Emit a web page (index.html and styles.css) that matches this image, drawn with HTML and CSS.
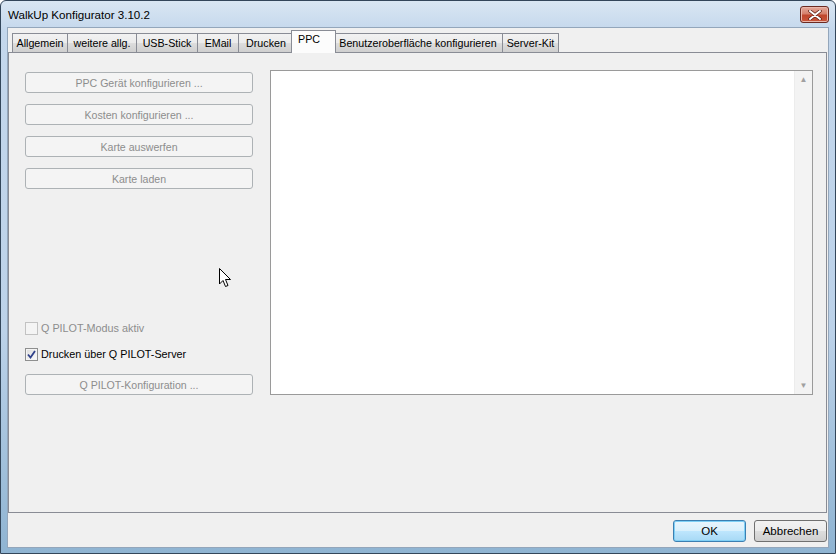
FILE: index.html
```html
<!DOCTYPE html>
<html lang="de">
  <head>
    <meta charset="UTF-8" />
    <title>WalkUp Konfigurator 3.10.2</title>
    <link rel="stylesheet" href="styles.css">
  </head>
  <body>
    <div class="window">
      <div class="titlebar">
        <span class="title">WalkUp Konfigurator 3.10.2</span>
        <button class="close-button">
          <svg width="14" height="10" viewBox="0 0 14 10">
            <path d="M2 1 L12 9 M12 1 L2 9" stroke="#5a1a10" stroke-width="3.4" stroke-linecap="round" />
            <path d="M2 1 L12 9 M12 1 L2 9" stroke="#fff" stroke-width="2" stroke-linecap="round" />
          </svg>
        </button>
      </div>

      <div class="client">
        <div class="tabs">
          <div class="tab" style="width: 56px">Allgemein</div>
          <div class="tab" style="width: 70px">weitere allg.</div>
          <div class="tab" style="width: 62px">USB-Stick</div>
          <div class="tab" style="width: 42px">EMail</div>
          <div class="tab" style="width: 56px">Drucken</div>
          <div class="tab active-tab" style="width: 45px">PPC</div>
          <div class="tab" style="width: 170px">Benutzeroberfläche konfigurieren</div>
          <div class="tab" style="width: 57px">Server-Kit</div>
        </div>

        <div class="tab-panel">
          <div class="left-column">
            <div class="button-group">
              <button class="button" disabled>PPC Gerät konfigurieren ...</button>
              <button class="button" disabled>Kosten konfigurieren ...</button>
              <button class="button" disabled>Karte auswerfen</button>
              <button class="button" disabled>Karte laden</button>
            </div>

            <div class="pilot-group">
              <label class="check-row disabled">
                <span class="checkbox"></span>
                Q PILOT-Modus aktiv
              </label>
              <label class="check-row">
                <span class="checkbox checked">
                  <svg width="9" height="9" viewBox="0 0 9 9">
                    <path d="M1 4.5 L3.5 7.5 L8 1" fill="none" stroke="#30418a" stroke-width="1.8" />
                  </svg>
                </span>
                Drucken über Q PILOT-Server
              </label>
              <button class="button pilot-button" disabled>Q PILOT-Konfiguration ...</button>
            </div>
          </div>

          <div class="log-box">
            <div class="log-text"></div>
            <div class="scrollbar">
              <span class="arrow">&#9650;</span>
              <span class="arrow">&#9660;</span>
            </div>
          </div>
        </div>

        <div class="dialog-buttons">
          <button class="dialog-button default-button">OK</button>
          <button class="dialog-button">Abbrechen</button>
        </div>
      </div>

      <svg class="cursor" width="13" height="20" viewBox="0 0 13 20">
        <path d="M0.5 0.5 L0.5 16 L4 12.5 L6.5 18.5 L9 17.5 L6.5 11.5 L11.5 11.5 Z" fill="#fff" stroke="#000" stroke-width="1" />
      </svg>
    </div>
  </body>
</html>
```

FILE: styles.css
```css
body {
  margin: 0;
  background: #ffffff;
  font-family: 'Liberation Sans', Arial, sans-serif;
  font-size: 11px;
}

.window {
  position: relative;
  width: 836px;
  height: 554px;
  box-sizing: border-box;
  border: 1px solid #33465a;
  border-radius: 6px 6px 0 0;
  background: linear-gradient(to bottom, #d9e6f3 0, #c4d7ec 30px, #bcd2e9 60%, #8fb4d2 100%);
  display: flex;
  flex-direction: column;
  padding: 0 6px 5px 6px;
}

.titlebar {
  height: 26px;
  display: flex;
  align-items: center;
  justify-content: space-between;
}

.title {
  font-size: 11.6px;
  color: #000;
  padding-left: 1px;
  padding-top: 1px;
}

.close-button {
  width: 29px;
  height: 17px;
  margin-top: 1px;
  border: 1px solid #6b2a22;
  border-radius: 3px;
  background: linear-gradient(to bottom, #e3a99b 0, #d6806c 45%, #c0462d 55%, #c9563b 100%);
  box-shadow: inset 0 0 0 1px #eab7ab;
  display: flex;
  align-items: center;
  justify-content: center;
  padding: 0;
}

.client {
  flex-grow: 1;
  background: #f0f0f0;
  border: 1px solid #93a6bb;
  display: flex;
  flex-direction: column;
}

.tabs {
  display: flex;
  align-items: flex-end;
  height: 24px;
  padding-left: 4px;
}

.tab {
  box-sizing: border-box;
  height: 19px;
  border: 1px solid #898c95;
  border-bottom: none;
  margin-right: -1px;
  background: linear-gradient(to bottom, #f2f2f2 0, #ebebeb 50%, #dddddd 51%, #cfcfcf 100%);
  text-align: center;
  line-height: 18px;
  font-size: 10.7px;
  color: #000;
  white-space: nowrap;
}

.active-tab {
  position: relative;
  z-index: 1;
  height: 23px;
  margin: 0 -3px -1px -2px;
  background: #fcfcfc;
  line-height: 17px;
  text-align: left;
  padding-left: 6px;
}

.tab-panel {
  height: 461px;
  box-sizing: border-box;
  margin: 0 1px 0 0;
  border: 1px solid #898c95;
  background: #f0f0f0;
  display: flex;
  gap: 17px;
  padding: 17px 0 0 16px;
}

.left-column {
  width: 228px;
  height: 325px;
  display: flex;
  flex-direction: column;
}

.button-group {
  display: flex;
  flex-direction: column;
  gap: 11px;
  margin-top: 2px;
}

.button {
  height: 21px;
  width: 228px;
  border: 1px solid #adb2b5;
  border-radius: 3px;
  background: #f4f4f4;
  color: #8d8d8d;
  font-family: inherit;
  font-size: 10.6px;
  padding: 0;
}

.pilot-group {
  margin-top: auto;
  display: flex;
  flex-direction: column;
}

.check-row {
  display: flex;
  align-items: center;
  gap: 3px;
  height: 16px;
  color: #000;
  font-size: 10.8px;
}

.check-row + .check-row {
  margin-top: 10px;
}

.check-row.disabled {
  color: #8d8d8d;
}

.checkbox {
  box-sizing: border-box;
  width: 13px;
  height: 13px;
  border: 1px solid #8e8f8f;
  background: linear-gradient(135deg, #dcdcdc, #fcfcfc);
  box-shadow: inset 0 0 0 1px #f4f4f4;
  display: flex;
  align-items: center;
  justify-content: center;
}

.check-row.disabled .checkbox {
  border-color: #c2c2c2;
  background: #f4f4f4;
}

.pilot-button {
  margin-top: 12px;
}

.log-box {
  width: 543px;
  height: 325px;
  box-sizing: border-box;
  border: 1px solid #9a9a9a;
  background: #fff;
  display: flex;
}

.log-text {
  flex-grow: 1;
}

.scrollbar {
  width: 17px;
  background: #f3f3f3;
  border-left: 1px solid #ececec;
  display: flex;
  flex-direction: column;
  justify-content: space-between;
  align-items: center;
  padding: 4px 0;
}

.arrow {
  font-size: 8px;
  color: #a0a0a0;
}

.dialog-buttons {
  flex-grow: 1;
  display: flex;
  justify-content: flex-end;
  align-items: center;
  gap: 8px;
  padding: 2px 1px 0 0;
}

.dialog-button {
  height: 22px;
  width: 73px;
  border: 1px solid #707070;
  border-radius: 3px;
  background: linear-gradient(to bottom, #f2f2f2 0, #ebebeb 50%, #dddddd 51%, #cfcfcf 100%);
  font-family: inherit;
  font-size: 11.5px;
  color: #000;
  padding: 0;
}

.default-button {
  border-color: #3c7fb1;
  background: linear-gradient(to bottom, #eaf6fd 0, #d9f0fc 50%, #bee6fd 51%, #a7d9f5 100%);
  box-shadow: inset 0 0 0 1px #7fd0f6;
}

.cursor {
  position: absolute;
  left: 218px;
  top: 267px;
}
```
